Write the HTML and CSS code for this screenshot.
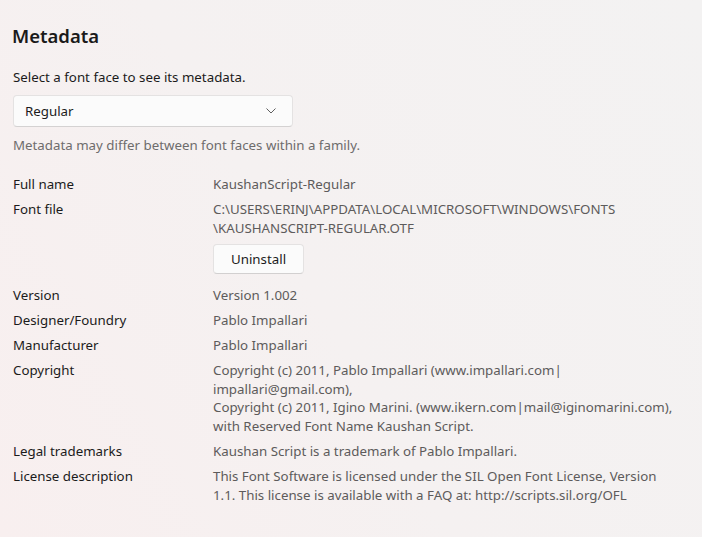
FILE: index.html
```html
<!DOCTYPE html>
<html>
<head>
<meta charset="utf-8">
<link rel="stylesheet" href="styles.css">
</head>
<body>
<main class="page">
  <h1 class="title">Metadata</h1>
  <p class="prompt">Select a font face to see its metadata.</p>
  <div class="dropdown">
    <span class="dropdown-text">Regular</span>
    <svg class="chevron" width="10" height="6" viewBox="0 0 10 6"><path d="M0.5 0.5 L5 5 L9.5 0.5" fill="none" stroke="#5f5f5f" stroke-width="1"/></svg>
  </div>
  <p class="hint">Metadata may differ between font faces within a family.</p>

  <dl class="meta">
    <dt>Full name</dt>
    <dd>KaushanScript-Regular</dd>

    <dt>Font file</dt>
    <dd>
      <div>C:\USERS\ERINJ\APPDATA\LOCAL\MICROSOFT\WINDOWS\FONTS<br>\KAUSHANSCRIPT-REGULAR.OTF</div>
      <button class="btn">Uninstall</button>
    </dd>

    <dt>Version</dt>
    <dd>Version 1.002</dd>

    <dt>Designer/Foundry</dt>
    <dd>Pablo Impallari</dd>

    <dt>Manufacturer</dt>
    <dd>Pablo Impallari</dd>

    <dt>Copyright</dt>
    <dd class="multi">Copyright (c) 2011, Pablo Impallari (www.impallari.com|<br>impallari@gmail.com),<br>Copyright (c) 2011, Igino Marini. (www.ikern.com|mail@iginomarini.com),<br>with Reserved Font Name Kaushan Script.</dd>

    <dt>Legal trademarks</dt>
    <dd>Kaushan Script is a trademark of Pablo Impallari.</dd>

    <dt>License description</dt>
    <dd>This Font Software is licensed under the SIL Open Font License, Version<br>1.1. This license is available with a FAQ at: http://scripts.sil.org/OFL</dd>
  </dl>
</main>
</body>
</html>
```

FILE: styles.css
```css
html, body {
  margin: 0;
  padding: 0;
  height: 100%;
}
body {
  background: linear-gradient(60deg, #f8efef 0%, #f5f1f1 45%, #f3f2f2 100%);
  font-family: "Noto Sans", "Open Sans", sans-serif;
  font-size: 13.3px;
  color: #1b1b1b;
  overflow: hidden;
}
.page {
  padding: 22px 0 0 13px;
}
.title {
  margin: 0 0 0 -1px;
  font-size: 18.5px;
  line-height: 28px;
  font-weight: 600;
  color: #1a1a1a;
}
.prompt {
  margin: 18px 0 0;
  line-height: 19px;
}
.dropdown {
  margin-top: 8px;
  height: 30px;
  box-sizing: content-box;
  border: 1px solid #e4e2e2;
  border-bottom-color: #d4d2d2;
  border-radius: 4px;
  background: #fbfbfb;
  display: flex;
  align-items: center;
  justify-content: space-between;
  padding: 0 16px 0 11px;
  width: 251px;
}
.dropdown-text {
  line-height: 19px;
}
.chevron {
  display: block;
}
.hint {
  margin: 9px 0 0;
  line-height: 19px;
  color: #6e6c6c;
}
.meta {
  margin: 20px 0 0;
  display: grid;
  grid-template-columns: 200px 480px;
  row-gap: 6px;
  line-height: 19px;
}
.meta dt {
  margin: 0;
  color: #1b1b1b;
}
.meta dd {
  margin: 0;
  color: #5d5b5b;
  white-space: nowrap;
}
.meta dd.multi {
  line-height: 18.7px;
}
.btn {
  display: block;
  margin: 6px 0 6px;
  height: 30px;
  padding: 0 17px;
  border: 1px solid #e4e2e2;
  border-bottom-color: #d2d0d0;
  border-radius: 4px;
  background: #fbfbfb;
  font-family: inherit;
  font-size: 13.3px;
  color: #1b1b1b;
}
```
